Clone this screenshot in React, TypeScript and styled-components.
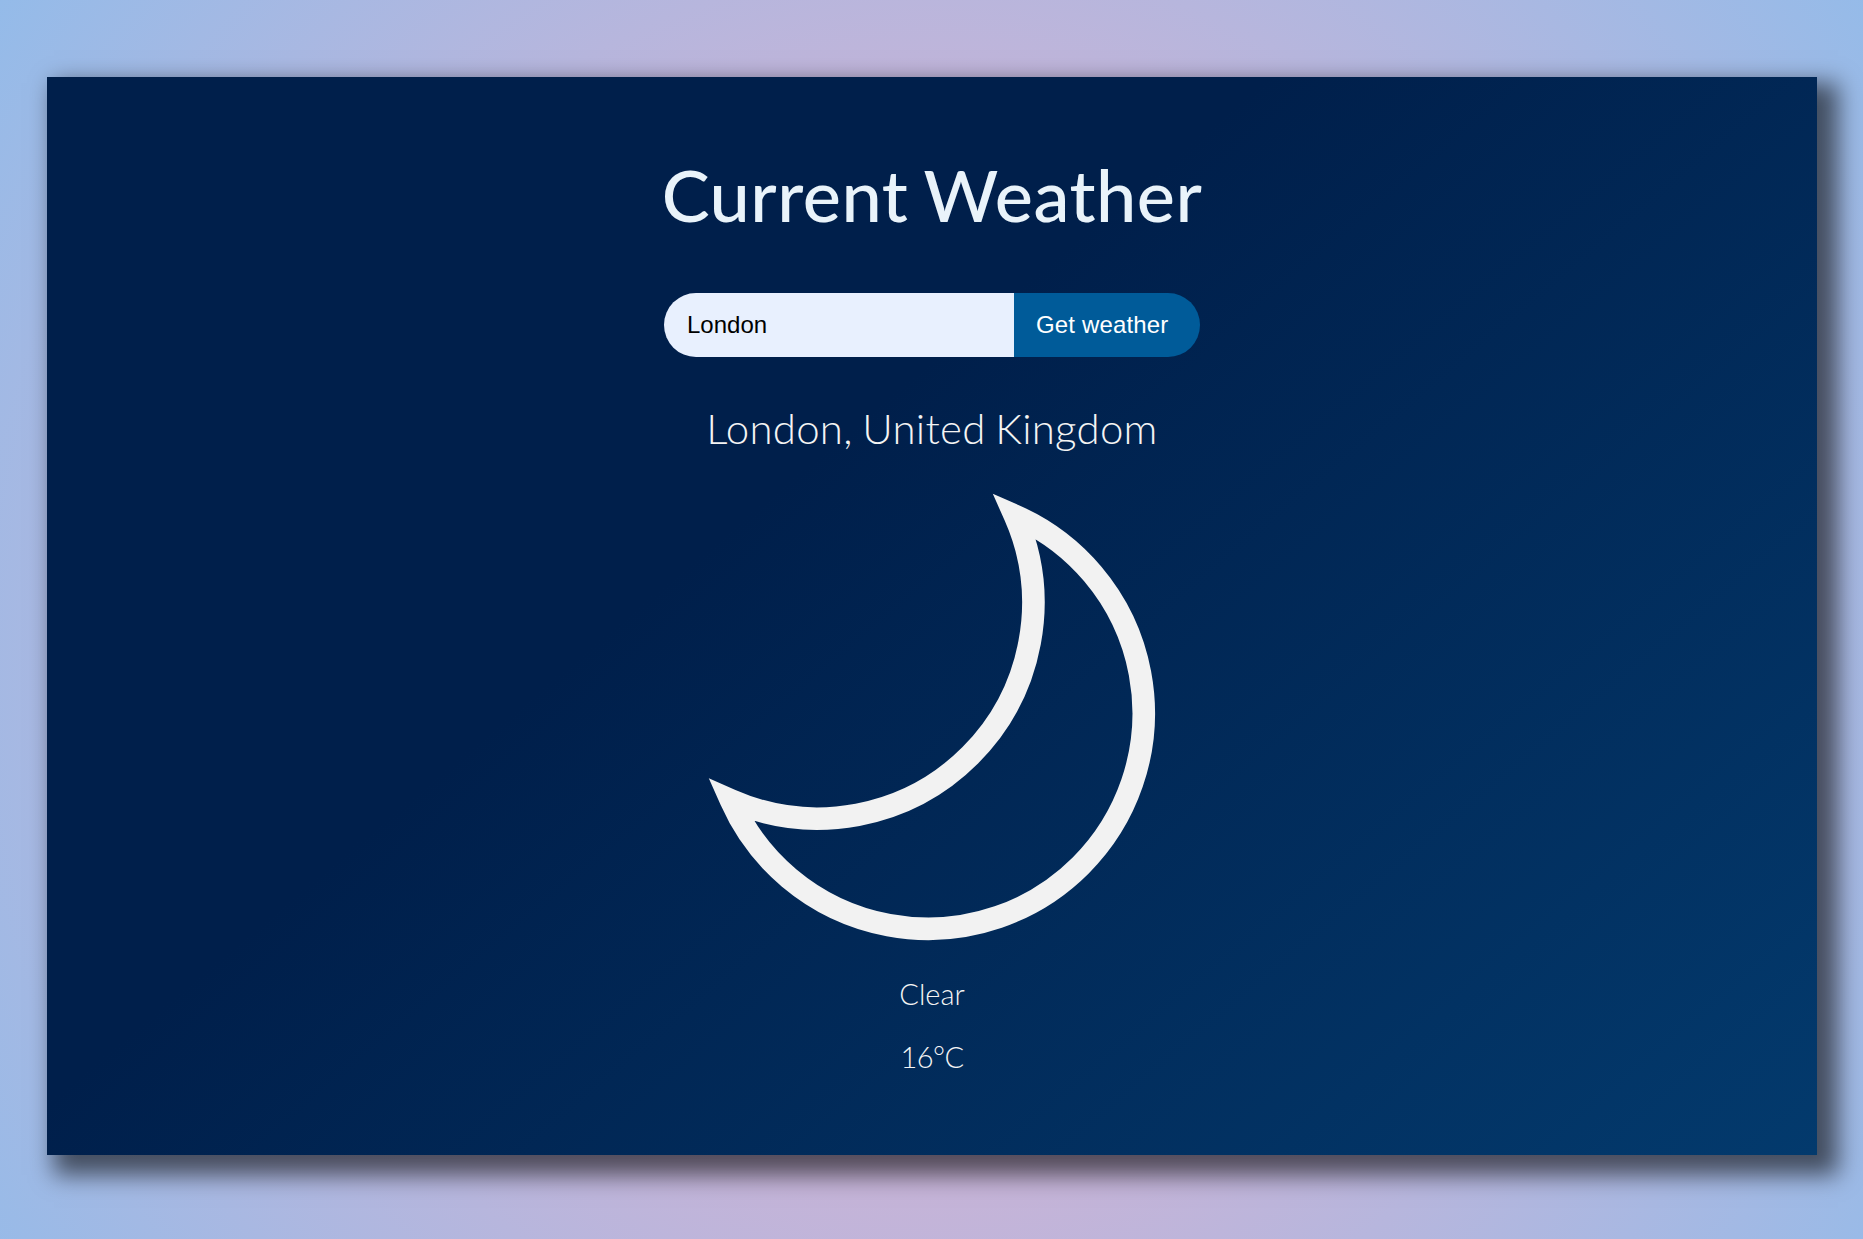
import React, { useState } from "react";
import styled, { createGlobalStyle } from "styled-components";

const GlobalStyle = createGlobalStyle`
  *, *::before, *::after { box-sizing: border-box; }
  html, body { margin: 0; padding: 0; }
  body { font-family: "Lato", "Open Sans", sans-serif; }
`;

const Page = styled.div`
  width: 100vw;
  height: 1239px;
  padding: 77px 46px 84px 47px;
  overflow: hidden;
  background: radial-gradient(circle at 50.5% 54%, #eeaeca 0%, #94bbe9 100%);
`;

const Panel = styled.main`
  display: flex;
  flex-direction: column;
  align-items: center;
  width: 100%;
  height: 1078px;
  padding-top: 74px;
  color: #f4f4f4;
  background: linear-gradient(140deg, #001f4b 40%, #033a6d 100%);
  box-shadow: 14px 13px 22px 7px rgba(0, 0, 0, 0.58);
`;

const Title = styled.h1`
  margin: 0;
  font-size: 72px;
  line-height: 86px;
  font-weight: 500;
  letter-spacing: 0.5px;
  word-spacing: -2.5px;
  color: #e9f3fa;
  white-space: nowrap;
`;

const SearchForm = styled.form`
  display: flex;
  width: 536px;
  height: 64px;
  margin-top: 56px;
`;

const CityInput = styled.input`
  width: 350px;
  height: 100%;
  padding: 0 23px;
  border: 0;
  border-radius: 32px 0 0 32px;
  outline: 0;
  background: #e8f0fe;
  color: #000;
  font: 24px "Liberation Sans", Arial, sans-serif;
`;

const SubmitButton = styled.button`
  flex: 1;
  height: 100%;
  padding: 0 0 0 22px;
  border: 0;
  border-radius: 0 32px 32px 0;
  background: #005b99;
  color: #fff;
  font: 24px "Liberation Sans", Arial, sans-serif;
  letter-spacing: 0.15px;
  text-align: left;
  white-space: nowrap;
`;

const Place = styled.h2`
  margin: 45px 0 0;
  font-size: 42px;
  line-height: 52px;
  font-weight: 300;
  letter-spacing: 0.25px;
  word-spacing: -2px;
  white-space: nowrap;
`;

const MoonIcon = styled.svg`
  display: block;
  flex: none;
  width: 450px;
  height: 450px;
  margin-top: 38px;
`;

const Reading = styled.p<{ $tight?: boolean }>`
  margin: 0;
  font-size: 29px;
  line-height: 36px;
  font-weight: 300;
  letter-spacing: ${({ $tight }) => ($tight ? "-0.6px" : "0")};

  & + & { margin-top: 27px; }
`;

const Readings = styled.div`
  margin-top: 34px;
  text-align: center;
`;

export default function App() {
  const [city, setCity] = useState("London");

  return (
    <>
      <GlobalStyle />
      <Page>
        <Panel>
          <Title>Current Weather</Title>
          <SearchForm onSubmit={(e) => e.preventDefault()}>
            <CityInput
              aria-label="City"
              value={city}
              onChange={(e) => setCity(e.target.value)}
            />
            <SubmitButton type="submit">Get weather</SubmitButton>
          </SearchForm>
          <Place>London, United Kingdom</Place>
          <MoonIcon viewBox="706.9 491.8 450 450" aria-hidden="true">
            <path
              d="M1014.8 515.6A215.6 215.6 0 1 1 730.8 800.1A215.6 215.6 0 0 0 1014.8 515.6Z"
              fill="none"
              stroke="#f2f2f2"
              strokeWidth="22.6"
              strokeMiterlimit="10"
            />
          </MoonIcon>
          <Readings>
            <Reading>Clear</Reading>
            <Reading $tight>16°C</Reading>
          </Readings>
        </Panel>
      </Page>
    </>
  );
}
